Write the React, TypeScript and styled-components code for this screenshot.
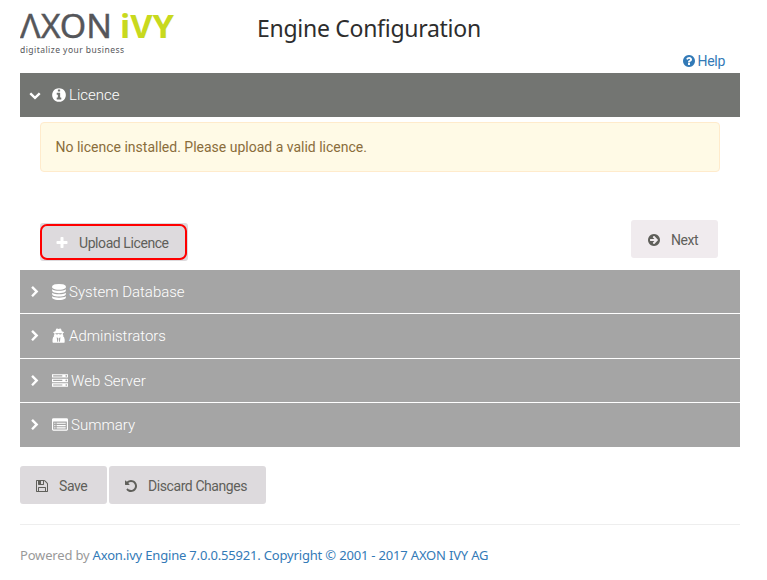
import React from "react";
import styled, { createGlobalStyle } from "styled-components";

const GlobalStyle = createGlobalStyle`
  * { box-sizing: border-box; }
  body { margin: 0; background: #fff; font-family: Roboto, "Liberation Sans", sans-serif; }
`;

const disc =
  "M1664 896q0 209-103 385.500t-279.500 279.500-385.500 103-385.500-103-279.500-279.500-103-385.500 103-385.500 279.500-279.500 385.500-103 385.500 103 279.500 279.500 103 385.500z";

const led = (y: number) =>
  `M1696 ${y}q0-40-28-68t-68-28-68 28-28 68 28 68 68 28 68-28 28-68z`;
const bullet = (y: number) =>
  `M384 ${y}v64q0 13-9.500 22.500t-22.500 9.500h-64q-13 0-22.500-9.500t-9.500-22.500v-64q0-13 9.500-22.500t22.500-9.500h64q13 0 22.500 9.500t9.500 22.500z`;
const line = (y: number) =>
  `M1536 ${y}v64q0 13-9.500 22.500t-22.500 9.500h-960q-13 0-22.500-9.500t-9.500-22.500v-64q0-13 9.500-22.500t22.500-9.500h960q13 0 22.500 9.500t9.500 22.500z`;

const glyphs = {
  chevronDown:
    "M1683 808l-742 741q-19 19-45 19t-45-19l-742-741q-19-19-19-45.500t19-45.500l166-165q19-19 45-19t45 19l531 531 531-531q19-19 45-19t45 19l166 165q19 19 19 45.500t-19 45.500z",
  chevronRight:
    "M1363 877l-742 742q-19 19-45 19t-45-19l-166-166q-19-19-19-45t19-45l531-531-531-531q-19-19-19-45t19-45l166-166q19-19 45-19t45 19l742 742q19 19 19 45t-19 45z",
  info:
    "M1152 1376v-160q0-14-9-23t-23-9h-96v-512q0-14-9-23t-23-9h-320q-14 0-23 9t-9 23v160q0 14 9 23t23 9h96v320h-96q-14 0-23 9t-9 23v160q0 14 9 23t23 9h448q14 0 23-9t9-23zM1024 480v-160q0-14-9-23t-23-9h-192q-14 0-23 9t-9 23v160q0 14 9 23t23 9h192q14 0 23-9t9-23z" + disc,
  question:
    "M1024 1376v-192q0-14-9-23t-23-9h-192q-14 0-23 9t-9 23v192q0 14 9 23t23 9h192q14 0 23-9t9-23zM1280 704q0-88-55.500-163t-138.500-116-170-41q-243 0-371 213-15 24 8 42l132 100q7 6 19 6 16 0 25-12 53-68 86-92 34-24 86-24 48 0 85.500 26t37.500 59q0 38-20 61t-68 45q-63 28-115.500 86.500t-52.500 125.500v36q0 14 9 23t23 9h192q14 0 23-9t9-23q0-19 21.500-49.500t54.500-49.500q32-18 49-28.500t46-35 44.500-48 28-60.500 12.500-81z" + disc,
  arrow:
    "M1413 896q0-27-18-45l-91-91-362-362q-18-18-45-18t-45 18l-91 91q-18 18-18 45t18 45l189 189h-502q-26 0-45 19t-19 45v128q0 26 19 45t45 19h502l-189 189q-19 19-19 45t19 45l91 91q18 18 45 18t45-18l362-362 91-91q18-18 18-45z" + disc,
  plus:
    "M1600 736v192q0 40-28 68t-68 28h-416v416q0 40-28 68t-68 28h-192q-40 0-68-28t-28-68v-416h-416q-40 0-68-28t-28-68v-192q0-40 28-68t68-28h416v-416q0-40 28-68t68-28h192q40 0 68 28t28 68v416h416q40 0 68 28t28 68z",
  database:
    "M896 768q237 0 443-43t325-127v170q0 69-103 128t-280 93.500-385 34.500-385-34.500-280-93.500-103-128v-170q119 84 325 127t443 43zm0 768q237 0 443-43t325-127v170q0 69-103 128t-280 93.500-385 34.500-385-34.500-280-93.500-103-128v-170q119 84 325 127t443 43zm0-384q237 0 443-43t325-127v170q0 69-103 128t-280 93.500-385 34.500-385-34.500-280-93.500-103-128v-170q119 84 325 127t443 43zm0-1152q208 0 385 34.500t280 93.500 103 128v128q0 69-103 128t-280 93.500-385 34.500-385-34.500-280-93.500-103-128v-128q0-69 103-128t280-93.500 385-34.500z",
  agent:
    "M570 100Q610 30 680 50L850 100 1020 50Q1090 30 1130 100L1210 370 1440 440V540L1320 600V720L1400 800 1340 900Q1500 980 1530 1300V1530Q1530 1664 1400 1664H300Q170 1664 170 1530V1300Q200 980 360 900L300 800 380 720V600L260 540V440L490 370ZM500 600V680Q640 750 760 690L850 650 940 690Q1060 750 1200 680V600ZM640 1040L700 1540H790L820 1180 750 1090ZM1060 1040L950 1090 880 1180 910 1540H1000Z",
  server:
    "M128 1408h1024v-128h-1024v128zM128 896h1024v-128h-1024v128zM128 384h1024v-128h-1024v128z" +
    led(1344) + led(832) + led(320) +
    "M1792 1152v384h-1792v-384zM1792 640v384h-1792v-384zM1792 128v384h-1792v-384z",
  list:
    bullet(1184) + bullet(928) + bullet(672) + line(1184) + line(928) + line(672) +
    "M1664 1376v-832q0-13-9.500-22.500t-22.500-9.500h-1472q-13 0-22.500 9.500t-9.500 22.500v832q0 13 9.500 22.500t22.500 9.500h1472q13 0 22.500-9.500t9.500-22.500zM1792 288v1088q0 66-47 113t-113 47h-1472q-66 0-113-47t-47-113v-1088q0-66 47-113t113-47h1472q66 0 113 47t47 113z",
  save:
    "M512 1536h768v-384h-768v384zm896 0h128v-896q0-14-10-38.500t-20-34.500l-281-281q-10-10-34-20t-39-10v416q0 40-28 68t-68 28h-576q-40 0-68-28t-28-68v-416h-128v1280h128v-416q0-40 28-68t68-28h832q40 0 68 28t28 68v416zm-384-928v-320q0-13-9.500-22.500t-22.500-9.500h-192q-13 0-22.500 9.500t-9.500 22.500v320q0 13 9.500 22.500t22.500 9.500h192q13 0 22.500-9.500t9.500-22.500zm640 32v928q0 40-28 68t-68 28h-1344q-40 0-68-28t-28-68v-1344q0-40 28-68t68-28h928q40 0 88 20t76 48l280 280q28 28 48 76t20 88z",
  undo:
    "M1664 896q0 156-61 298t-164 245-245 164-298 61q-172 0-327-72.500t-264-204.500q-7-10-6.500-22.500t8.500-20.500l137-138q10-9 25-9 16 2 23 12 73 95 179 147t225 52q104 0 198.500-40.500t163.500-109.500 109.500-163.500 40.500-198.500-40.500-198.500-109.500-163.500-163.500-109.500-198.500-40.500q-98 0-188 35.500t-160 101.500l137 138q31 30 14 69-17 40-59 40h-448q-26 0-45-19t-19-45v-448q0-42 40-59 39-17 69 14l130 129q107-101 244.500-156.500t284.500-55.500q156 0 298 61t245 164 164 245 61 298z",
};
type Glyph = keyof typeof glyphs;

const Svg = styled.svg<{ $size: number }>`
  display: block;
  flex: none;
  width: ${(p) => p.$size}px;
  height: ${(p) => p.$size}px;
  fill: currentColor;
`;

function Icon({ name, size = 14 }: { name: Glyph; size?: number }) {
  return (
    <Svg $size={size} viewBox="0 0 1792 1792" aria-hidden="true">
      <path fillRule="evenodd" d={glyphs[name]} />
    </Svg>
  );
}

const Page = styled.main`
  width: 720px;
  margin-left: 20px;
  height: 580px;
  display: flex;
  flex-direction: column;
`;

const Header = styled.header`
  display: flex;
  height: 73px;
  flex: none;
`;

const Logo = styled.svg`
  display: block;
  width: 160px;
  height: 60px;
  flex: none;
`;

const Title = styled.h1`
  margin: 10px 0 0 77px;
  font: 400 23px/36px "Noto Sans", "Open Sans", sans-serif;
  letter-spacing: -0.28px;
  color: #2d2d2d;
  white-space: nowrap;
  flex: 1;
`;

const Help = styled.a`
  display: flex;
  align-items: center;
  gap: 2px;
  align-self: flex-start;
  margin: 51px 15px 0 0;
  font-size: 14px;
  letter-spacing: -0.3px;
  line-height: 20px;
  color: #337ab7;
`;

const Bar = styled.div<{ $active?: boolean; $height: number }>`
  display: flex;
  align-items: center;
  flex: none;
  height: ${(p) => p.$height}px;
  padding-left: 9px;
  color: #fff;
  font-size: 15px;
  font-weight: 300;
  background: ${(p) => (p.$active ? "#737572" : "#a5a5a5")};
`;

const Toggle = styled.span<{ $width?: number }>`
  display: flex;
  width: ${(p) => p.$width ?? 22}px;
`;

const BarLabel = styled.span<{ $gap: number }>`
  margin-left: ${(p) => p.$gap}px;
  white-space: nowrap;
`;

const Panel = styled.section`
  height: 153px;
  flex: none;
  padding: 5px 20px 0;
`;

const Alert = styled.div`
  height: 50px;
  padding-left: 14.5px;
  border: 1px solid #ffebcc;
  border-radius: 4px;
  background: #fffae6;
  color: #8a6d3b;
  font-size: 14px;
  line-height: 49px;
`;

const PanelActions = styled.div`
  display: flex;
  justify-content: space-between;
  align-items: flex-start;
  margin: 48px 2px 0 0;
`;

const Button = styled.button<{ $width: number; $soft?: boolean }>`
  display: flex;
  align-items: center;
  width: ${(p) => p.$width}px;
  height: 38px;
  padding: 1px 0 0 ${(p) => (p.$soft ? 16 : 15)}px;
  gap: 10px;
  border: 0;
  border-radius: 3px;
  background: ${(p) => (p.$soft ? "#f0ebee" : "#dddadd")};
  color: #5f5f5a;
  font: 400 14px/20px Roboto, sans-serif;
  letter-spacing: -0.42px;
  white-space: nowrap;
`;

const UploadButton = styled(Button)`
  margin-top: 3px;
  padding: 0;
  & > span {
    display: flex;
    align-items: center;
    gap: 10px;
    width: 147px;
    height: 36px;
    padding: 1px 0 0 13px;
    border: 2px solid #f00;
    border-radius: 7px;
  }
  svg { color: #fff; }
`;

const Accordion = styled.div`
  display: flex;
  flex-direction: column;
  gap: 1px;
`;

const Actions = styled.div`
  display: flex;
  gap: 2px;
  margin-top: 19px;
`;

const Footer = styled.footer`
  margin-top: 20px;
  padding-top: 20px;
  border-top: 1px solid #eee;
  font: 400 13px/20px "Noto Sans", "Open Sans", sans-serif;
  letter-spacing: -0.18px;
  color: #999;
  white-space: nowrap;
  a { color: #337ab7; }
`;

const sections: { icon: Glyph; label: string; height: number; toggle: number; gap: number }[] = [
  { icon: "database", label: "System Database", height: 43, toggle: 22, gap: 2 },
  { icon: "agent", label: "Administrators", height: 44, toggle: 22, gap: 2 },
  { icon: "server", label: "Web Server", height: 43, toggle: 23, gap: 3 },
  { icon: "list", label: "Summary", height: 44, toggle: 23, gap: 3 },
];

export default function App() {
  return (
    <>
      <GlobalStyle />
      <Page>
        <Header>
          <Logo viewBox="0 0 160 60" role="img" aria-label="Axon Ivy">
            <g fontFamily="Noto Sans, sans-serif" fontSize="32">
              <text x="0" y="38" fill="#55565a" stroke="#55565a" strokeWidth="0.4" textLength="92" lengthAdjust="spacingAndGlyphs">ΛXON</text>
              <text x="100" y="38" fill="#c8d91e" fontWeight="700" textLength="54" lengthAdjust="spacingAndGlyphs">iVY</text>
            </g>
            <text x="0" y="53" fill="#55565a" fontFamily="Noto Sans, sans-serif" fontSize="8.5" textLength="104">
              digitalize your business
            </text>
          </Logo>
          <Title>Engine Configuration</Title>
          <Help>
            <Icon name="question" size={14} />
            Help
          </Help>
        </Header>
        <Bar $active $height={44}>
          <Toggle><Icon name="chevronDown" size={12} /></Toggle>
          <Icon name="info" size={16} />
          <BarLabel $gap={2}>Licence</BarLabel>
        </Bar>
        <Panel>
          <Alert>No licence installed. Please upload a valid licence.</Alert>
          <PanelActions>
            <UploadButton $width={148}>
              <span><Icon name="plus" />Upload Licence</span>
            </UploadButton>
            <Button $width={87} $soft><Icon name="arrow" />Next</Button>
          </PanelActions>
        </Panel>
        <Accordion>
          {sections.map((s) => (
            <Bar key={s.label} $height={s.height}>
              <Toggle $width={s.toggle}><Icon name="chevronRight" size={12} /></Toggle>
              <Icon name={s.icon} size={16} />
              <BarLabel $gap={s.gap}>{s.label}</BarLabel>
            </Bar>
          ))}
        </Accordion>
        <Actions>
          <Button $width={87}><Icon name="save" />Save</Button>
          <Button $width={157}><Icon name="undo" />Discard Changes</Button>
        </Actions>
        <Footer>
          Powered by <a>Axon.ivy Engine 7.0.0.55921. Copyright © 2001 - 2017 AXON IVY AG</a>
        </Footer>
      </Page>
    </>
  );
}
